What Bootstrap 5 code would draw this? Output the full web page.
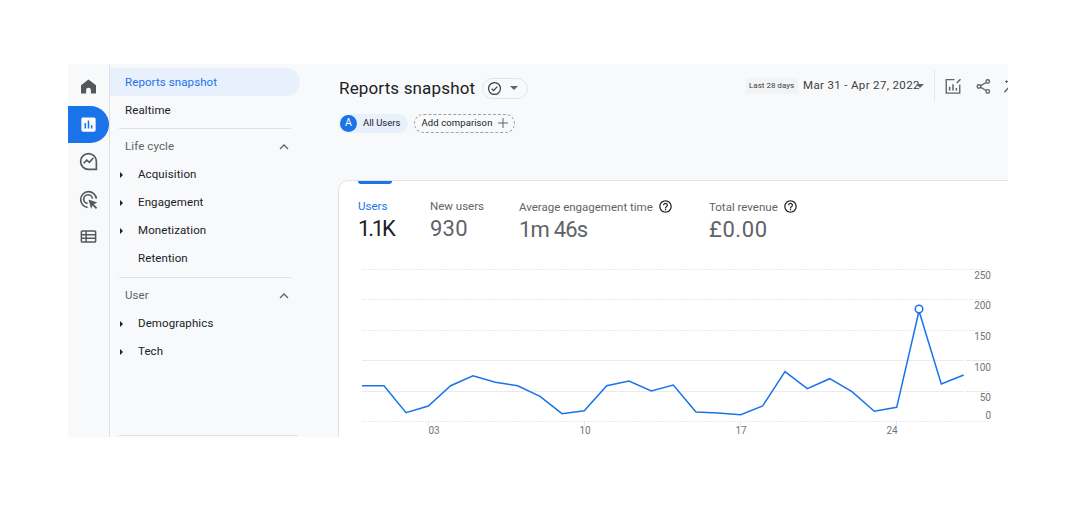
<!DOCTYPE html>
<html lang="en">

<head>
    <meta charset="UTF-8" />
    <meta name="viewport" content="width=device-width, initial-scale=1.0" />
    <title>Reports snapshot</title>
    <link href="https://cdn.jsdelivr.net/npm/bootstrap@5.3.3/dist/css/bootstrap.min.css" rel="stylesheet" />
    <style>
        body { background: #fff; font-family: Roboto, "Liberation Sans", sans-serif; color: #202124; overflow: hidden; }
        .app-shell { width: 940px; height: 373px; margin: 64px 0 0 68px; background: #f8f9fb; overflow: hidden; }

        /* icon rail */
        .rail { width: 42px; flex: none; border-right: 1px solid #dfe1e5; padding-top: 4px; }
        .rail-item { height: 37.5px; width: 41px; color: #54585d; }
        .rail-item.on { background: #1a73e8; color: #fff; border-radius: 0 19px 19px 0; }

        /* report list */
        .side { width: 228px; flex: none; padding-top: 4px; }
        .side-row { height: 28px; font-size: 11.5px; letter-spacing: .1px; padding-left: 15px; width: 190px; }
        .side-top { padding-top: 2px; }
        .side-row.on { background: #e8f0fe; color: #1a73e8; border-radius: 0 14px 14px 0; }
        .side-head { color: #5f6368; padding-left: 15px; width: 181px; padding-right: 2px; }
        .side-sub { padding-left: 10px; }
        .side-sub .caret-slot { width: 18px; flex: none; }
        .side-line { width: 172px; margin: 4px 0 4px 9px; border-top: 1px solid #dfe1e5; }
        .side-foot { width: 179px; margin: 69px 0 0 9px; border-top: 1px solid #dfe1e5; }

        /* header */
        .main-col { min-width: 0; }
        .head-row { height: 46px; padding-top: 2px; padding-left: 1px; }
        .page-title { font-size: 17px; font-weight: 400; margin: 0; letter-spacing: .15px; white-space: nowrap; }
        .status-pill { width: 46px; height: 21px; margin-left: 7px; border: 1px solid #e0e3e7; border-radius: 11px; gap: 8px; padding-left: 4px; flex: none; }
        .tri-down { width: 0; height: 0; flex: none; border-left: 4px solid transparent; border-right: 4px solid transparent; border-top: 4px solid #5f6368; }
        .tri-right { display: inline-block; width: 0; height: 0; border-top: 3px solid transparent; border-bottom: 3px solid transparent; border-left: 3px solid #202124; }
        .date-tag { font-size: 8px; color: #3c4043; background: #f1f3f4; padding: 2px 3px; width: 52px; flex: none; white-space: nowrap; }
        .date-text { font-size: 11.5px; color: #3c4043; letter-spacing: .35px; margin: 0 6px 0 5px; width: 107px; flex: none; white-space: nowrap; }
        .tool-line { height: 30px; flex: none; border-left: 1px dotted #d5d8dc; margin-left: 10px; margin-right: 9px; }
        .tool-box { margin-left: auto; width: 262px; flex: none; margin-top: -4px; }
        .tool-share { margin-left: 13px; flex: none; }
        .tool-wand { margin-left: 11px; flex: none; }
        .chip-row { height: 24px; gap: 6px; padding-left: 1px; margin-top: 1px; }
        .user-chip { height: 19px; width: 69px; background: #e8f0fe; border-radius: 10px; font-size: 9.5px; gap: 6px; }
        .user-dot { width: 17px; height: 17px; margin-left: 1px; border-radius: 50%; background: #1a73e8; color: #fff; font-size: 10.5px; }
        .add-chip { height: 19px; width: 101px; border: 1px dashed #9aa0a6; border-radius: 10px; font-size: 9.5px; gap: 5px; letter-spacing: .1px; }

        /* card */
        .data-card { margin-top: 45px; height: 260px; width: 680px; background: #fff; border: 1px solid #e0e3e7; border-right: 0; border-radius: 10px 0 0 0; overflow: hidden; position: relative; }
        .tab-mark { width: 34px; height: 3px; background: #1a73e8; border-radius: 0 0 3px 3px; margin-left: 19px; }
        .metric-row { padding: 15px 0 0 19px; }
        .metric-a { width: 72px; flex: none; }
        .metric-b { width: 89px; flex: none; }
        .metric-c { width: 190px; flex: none; }
        .metric-label { font-size: 11.5px; color: #5f6368; line-height: 14px; gap: 5px; margin-bottom: 1px; white-space: nowrap; }
        .metric-value { font-size: 22px; color: #5f6368; line-height: 29px; letter-spacing: .2px; }
        .metric-a .metric-value { letter-spacing: -2.2px; }
        .metric-c .metric-value { letter-spacing: -.8px; }
        .metric-d .metric-value { letter-spacing: .6px; }
        .metric-a .metric-label { color: #1a73e8; }
        .metric-a .metric-value { color: #202124; }
        .chart-box { display: block; margin-top: 19px; }
        .chart-box text { font-size: 10px; fill: #70757a; font-family: Roboto, "Liberation Sans", sans-serif; }
    </style>
</head>

<body>
    <div class="app-shell d-flex">

        <!-- RAIL -->
        <div class="rail d-flex flex-column">
            <div class="rail-item d-flex align-items-center justify-content-center">
                <svg width="15" height="17" viewBox="2.500 3 19 18" fill="currentColor"><path d="M12 3L2.500 10.500V21h6.500v-4.500a3 3 0 0 1 6 0V21h6.500V10.500z"/></svg>
            </div>
            <div class="rail-item on d-flex align-items-center justify-content-center">
                <svg width="19" height="19" viewBox="0 0 24 24" fill="currentColor"><path d="M19 3H5c-1.100 0-2 .9-2 2v14c0 1.100.9 2 2 2h14c1.100 0 2-.9 2-2V5c0-1.100-.9-2-2-2zM9 17H7v-7h2v7zm4 0h-2V7h2v10zm4 0h-2v-4h2v4z"/></svg>
            </div>
            <div class="rail-item d-flex align-items-center justify-content-center">
                <svg width="21" height="21" viewBox="0 0 24 24" fill="none" stroke="currentColor" stroke-width="1.900"><path d="M21 21h-9a9 9 0 1 1 9-9z"/><path d="M6.500 14l3.500-3.500 3 2.500 4.500-5"/></svg>
            </div>
            <div class="rail-item d-flex align-items-center justify-content-center">
                <svg width="21" height="21" viewBox="0 0 24 24" fill="none" stroke="currentColor" stroke-width="1.900"><path d="M11 21a9 9 0 1 1 10-10"/><path d="M11 16.500a5 5 0 1 1 5.500-5.500"/><path d="M12 12l10 3.500-4 1.800 4 4-1.500 1.500-4-4-1.500 4z" fill="currentColor" stroke="none"/></svg>
            </div>
            <div class="rail-item d-flex align-items-center justify-content-center">
                <svg width="19" height="19" viewBox="0 0 24 24" fill="none" stroke="currentColor" stroke-width="1.900"><rect x="3" y="5" width="18" height="14" rx="1"/><path d="M3 9.700h18M3 14.300h18M9 5v14"/></svg>
            </div>
        </div>

        <!-- REPORT LIST -->
        <div class="side">
            <div class="side-row side-top on d-flex align-items-center">Reports snapshot</div>
            <div class="side-row side-top d-flex align-items-center">Realtime</div>
            <div class="side-line"></div>
            <div class="side-row side-head d-flex align-items-center justify-content-between">
                <span>Life cycle</span>
                <svg width="10" height="6" viewBox="0 0 10 6" fill="none" stroke="#5f6368" stroke-width="1.300"><path d="M1 5l4-4 4 4"/></svg>
            </div>
            <div class="side-row side-sub d-flex align-items-center"><span class="caret-slot"><i class="tri-right"></i></span>Acquisition</div>
            <div class="side-row side-sub d-flex align-items-center"><span class="caret-slot"><i class="tri-right"></i></span>Engagement</div>
            <div class="side-row side-sub d-flex align-items-center"><span class="caret-slot"><i class="tri-right"></i></span>Monetization</div>
            <div class="side-row side-sub d-flex align-items-center"><span class="caret-slot"></span>Retention</div>
            <div class="side-line"></div>
            <div class="side-row side-head d-flex align-items-center justify-content-between">
                <span>User</span>
                <svg width="10" height="6" viewBox="0 0 10 6" fill="none" stroke="#5f6368" stroke-width="1.300"><path d="M1 5l4-4 4 4"/></svg>
            </div>
            <div class="side-row side-sub d-flex align-items-center"><span class="caret-slot"><i class="tri-right"></i></span>Demographics</div>
            <div class="side-row side-sub d-flex align-items-center"><span class="caret-slot"><i class="tri-right"></i></span>Tech</div>
            <div class="side-foot"></div>
        </div>

        <!-- MAIN -->
        <div class="main-col flex-fill">
            <div class="head-row d-flex align-items-center">
                <h1 class="page-title">Reports snapshot</h1>
                <div class="status-pill d-flex align-items-center">
                    <svg width="15" height="15" viewBox="0 0 24 24" fill="none" stroke="#3c4043" stroke-width="2"><circle cx="12" cy="12" r="9.500"/><path d="M7.500 12.500l3 3 6-6.500"/></svg>
                    <span class="tri-down"></span>
                </div>
                <div class="tool-box d-flex align-items-center">
                    <span class="date-tag">Last 28 days</span>
                    <span class="date-text">Mar 31 - Apr 27, 2022</span>
                    <span class="tri-down"></span>
                    <span class="tool-line"></span>
                    <svg class="flex-shrink-0" width="18" height="18" viewBox="0 0 24 24" fill="none" stroke="#5f6368" stroke-width="1.800"><path d="M14 3.500H3v18h18V10"/><path d="M7.500 18v-5M12 18V9.500M16.500 18v-3.500" stroke-width="2"/><path d="M17 8l5-5" stroke-width="2"/></svg>
                    <svg class="tool-share" width="17" height="17" viewBox="0 0 24 24" fill="none" stroke="#5f6368" stroke-width="1.900"><circle cx="18" cy="5" r="2.500"/><circle cx="5.500" cy="12" r="2.500"/><circle cx="18" cy="19" r="2.500"/><path d="M8 10.800l7.800-4.500M8 13.200l7.800 4.500"/></svg>
                    <svg class="tool-wand" width="17" height="17" viewBox="0 0 24 24" fill="none" stroke="#5f6368" stroke-width="2"><path d="M2 20L12 9l9 11"/><path d="M5 3v4M3 5h4M21 2v4M19 4h4" stroke-width="1.500"/></svg>
                </div>
            </div>

            <div class="chip-row d-flex align-items-center">
                <div class="user-chip d-flex align-items-center">
                    <span class="user-dot d-flex align-items-center justify-content-center">A</span>
                    <span>All Users</span>
                </div>
                <div class="add-chip d-flex align-items-center justify-content-center">
                    <span>Add comparison</span>
                    <svg width="10" height="10" viewBox="0 0 10 10" stroke="#5f6368" stroke-width="1"><path d="M5 0v10M0 5h10"/></svg>
                </div>
            </div>

            <div class="data-card">
                <div class="tab-mark"></div>
                <div class="metric-row d-flex">
                    <div class="metric-a">
                        <div class="metric-label d-flex align-items-center">Users</div>
                        <div class="metric-value">1.1K</div>
                    </div>
                    <div class="metric-b">
                        <div class="metric-label d-flex align-items-center">New users</div>
                        <div class="metric-value">930</div>
                    </div>
                    <div class="metric-c">
                        <div class="metric-label d-flex align-items-center">Average engagement time
                            <svg width="15" height="15" viewBox="0 0 24 24" fill="#202124"><path d="M11 18h2v-2h-2v2zm1-16C6.480 2 2 6.480 2 12s4.480 10 10 10 10-4.480 10-10S17.520 2 12 2zm0 18c-4.410 0-8-3.590-8-8s3.590-8 8-8 8 3.590 8 8-3.590 8-8 8zm0-14c-2.210 0-4 1.790-4 4h2c0-1.100.9-2 2-2s2 .9 2 2c0 2-3 1.750-3 5h2c0-2.250 3-2.500 3-5 0-2.210-1.790-4-4-4z"/></svg>
                        </div>
                        <div class="metric-value">1m 46s</div>
                    </div>
                    <div class="metric-d">
                        <div class="metric-label d-flex align-items-center">Total revenue
                            <svg width="15" height="15" viewBox="0 0 24 24" fill="#202124"><path d="M11 18h2v-2h-2v2zm1-16C6.480 2 2 6.480 2 12s4.480 10 10 10 10-4.480 10-10S17.520 2 12 2zm0 18c-4.410 0-8-3.590-8-8s3.590-8 8-8 8 3.590 8 8-3.590 8-8 8zm0-14c-2.210 0-4 1.790-4 4h2c0-1.100.9-2 2-2s2 .9 2 2c0 2-3 1.750-3 5h2c0-2.250 3-2.500 3-5 0-2.210-1.790-4-4-4z"/></svg>
                        </div>
                        <div class="metric-value">£0.00</div>
                    </div>
                </div>

                <!-- viewBox is in screenshot coordinates, the line points were read off the picture -->
                <svg class="chart-box" id="chart" width="669" height="175" viewBox="339 262 669 175"></svg>
            </div>
        </div>
    </div>

    <script>
        const points = [[362,384.7],[384,384.7],[406,411.7],[428.3,405],[450.7,384.7],[473,374.7],[495.3,381.3],[517.7,384.7],[540,395.3],[562,412.7],[584.3,409.7],[606.7,384.7],[629,380],[651.3,390],[673.3,384],[696,411],[718,412],[740.7,413.7],[762.7,405],[785,370.7],[807.3,387.7],[829.7,377.7],[852,390.7],[874.3,410.3],[896.7,406.3],[919,310],[941.3,383],[963.7,374]];
        const grid = [268.5,298.5,329.5,359.5,390.5,420.5];
        const yLabels = [['250',274],['200',304],['150',335],['100',366],['50',396],['0',414]];
        const xLabels = [['03',434,428.5],['10',585,584.5],['17',741,740.5],['24',892,896.5]];

        let svg = '';
        grid.forEach((y, i) => {
            const dash = (i === 3 || i === 4) ? '' : ' stroke-dasharray="2 1"';
            svg += `<path d="M362 ${y}H964M966 ${y}H990" stroke="#e8eaed" stroke-width="1"${dash}/>`;
        });
        yLabels.forEach(l => {
            svg += `<text x="991" y="${l[1] + 3.5}" text-anchor="end">${l[0]}</text>`;
        });
        xLabels.forEach(l => {
            svg += `<path d="M${l[2]} 421v4" stroke="#e8eaed"/>`;
            svg += `<text x="${l[1]}" y="433" text-anchor="middle">${l[0]}</text>`;
        });
        svg += `<polyline points="${points.map(p => p.join(',')).join(' ')}" fill="none" stroke="#1a73e8" stroke-width="1.500"/>`;
        svg += `<circle cx="919" cy="308" r="3.800" fill="#fff" stroke="#1a73e8" stroke-width="1.500"/>`;
        document.getElementById('chart').innerHTML = svg;
    </script>
    <script src="https://cdn.jsdelivr.net/npm/bootstrap@5.3.3/dist/js/bootstrap.bundle.min.js"></script>
</body>

</html>
